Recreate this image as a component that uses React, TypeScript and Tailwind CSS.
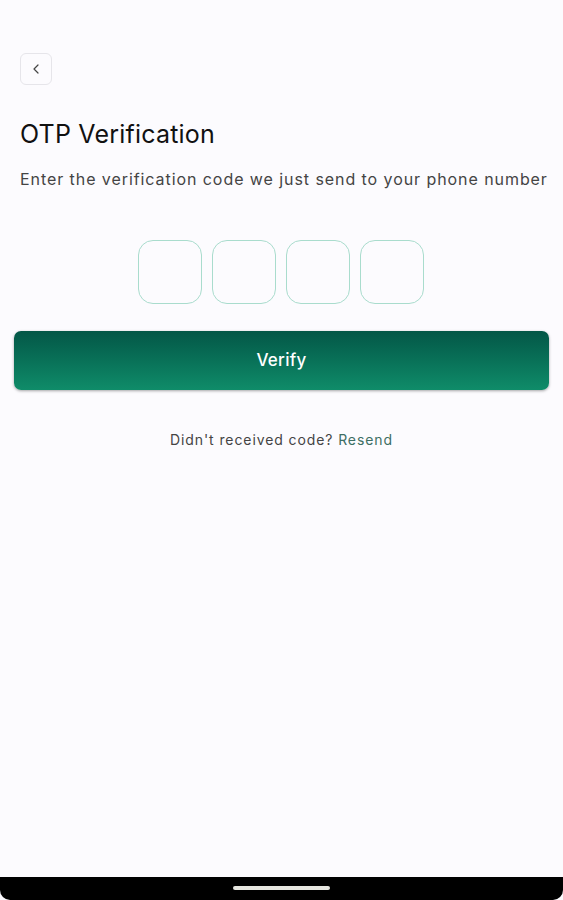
import React from "react";
import { ChevronLeft } from "lucide-react";

export default function App() {
  return (
    <div
      className="w-[563px] h-[900px] bg-[#fcfbfe] flex flex-col overflow-hidden"
      style={{ fontFamily: "Inter, 'Noto Sans', sans-serif" }}
    >
      <div className="flex-1 flex flex-col px-[14px] pt-[53px]">
        {/* back */}
        <button className="ml-[6px] w-[32px] h-[32px] rounded-[6px] border border-[#e6e5ea] flex items-center justify-center text-[#444]">
          <ChevronLeft size={16} strokeWidth={1.8} />
        </button>

        <h1 className="ml-[6px] mt-[33px] text-[25px] leading-[32px] text-[#111] font-normal tracking-[0.2px]">
          OTP Verification
        </h1>
        <p className="ml-[6px] mt-[18px] text-[16px] leading-[22px] text-[#444] tracking-[0.93px] whitespace-nowrap">
          Enter the verification code we just send to your phone number
        </p>

        {/* otp */}
        <div className="mt-[50px] flex justify-center gap-[10px] pr-[1px]">
          {[0, 1, 2, 3].map((i) => (
            <input
              key={i}
              maxLength={1}
              className="w-[64px] h-[64px] rounded-[15px] border-[1.5px] border-[#a9dccd] bg-transparent text-center text-xl outline-none"
            />
          ))}
        </div>

        <button className="mt-[27px] w-[535px] h-[59px] rounded-[7px] bg-gradient-to-b from-[#045747] to-[#0f8c69] text-white text-[17px] font-medium tracking-[0.3px] shadow-[0_1px_3px_rgba(0,0,0,0.35)]">
          Verify
        </button>

        <p className="mt-[39px] text-center text-[14px] text-[#444] tracking-[0.9px]">
          Didn't received code? <span className="text-[#3d6e63]">Resend</span>
        </p>
      </div>

      {/* nav bar */}
      <div className="h-[23px] bg-black rounded-b-[10px] flex justify-center pt-[9px] shrink-0">
        <div className="w-[97px] h-[4px] rounded-full bg-[#e6e6e0]" />
      </div>
    </div>
  );
}
